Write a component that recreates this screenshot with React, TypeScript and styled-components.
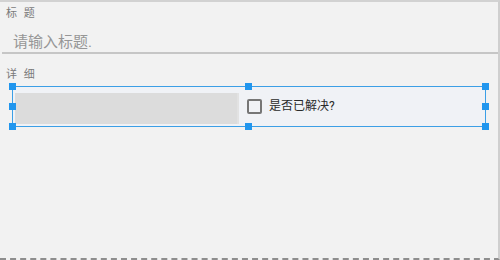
import styled, {createGlobalStyle} from 'styled-components';

const GlobalStyle = createGlobalStyle`
  html, body {
    margin: 0;
    padding: 0;
    background: #f2f2f2;
  }
  body {
    font-family: Roboto, "Noto Sans CJK SC", sans-serif;
  }
`;

const handles: Array<{x: 'left' | 'center' | 'right'; y: 'top' | 'middle' | 'bottom'}> = [
  {x: 'left', y: 'top'},
  {x: 'center', y: 'top'},
  {x: 'right', y: 'top'},
  {x: 'left', y: 'middle'},
  {x: 'right', y: 'middle'},
  {x: 'left', y: 'bottom'},
  {x: 'center', y: 'bottom'},
  {x: 'right', y: 'bottom'},
];

const App = (): JSX.Element => {
  return (
    <>
      <GlobalStyle/>
      <Page>
        <FieldLabel>标 题</FieldLabel>
        <TitleInput placeholder="请输入标题." readOnly/>
        <FieldLabel $gap={14}>详 细</FieldLabel>
        <Selection>
          <DetailField/>
          <CheckRow>
            <CheckBox/>
            <CheckText>是否已解决?</CheckText>
          </CheckRow>
          {handles.map((h) => (
            <Handle key={h.x + h.y} $x={h.x} $y={h.y}/>
          ))}
        </Selection>
      </Page>
    </>
  );
};

export default App;

const Page = styled.div`
  box-sizing: border-box;
  width: 500px;
  height: 260px;
  background: #f2f2f2;
  border-top: 2px solid #d2d2d2;
  border-right: 2px solid #cfcfcf;
  border-bottom: 2px dashed #8e8e8e;
  display: flex;
  flex-direction: column;
`;

const FieldLabel = styled.div<{$gap?: number}>`
  margin-top: ${({$gap}) => ($gap ?? 5)}px;
  padding-left: 6px;
  font-size: 11px;
  line-height: 13px;
  letter-spacing: 2px;
  color: #7a7a7a;
`;

const TitleInput = styled.input`
  box-sizing: border-box;
  display: block;
  width: 496px;
  height: 34px;
  margin: 0 0 0 2px;
  padding: 12px 0 0 11px;
  border: none;
  border-bottom: 2px solid #c6c6c6;
  background: transparent;
  outline: none;
  font-family: Roboto, "Noto Sans CJK SC", sans-serif;
  font-size: 15px;
  color: #333;

  &::placeholder {
    color: #969696;
  }
`;

const Selection = styled.div`
  position: relative;
  box-sizing: border-box;
  width: 474px;
  height: 41px;
  margin: 5px 0 0 12px;
  padding: 0 0 2px 2px;
  border: 1px solid #3c9fe6;
  background: #f0f2f6;
  display: flex;
  align-items: flex-end;
`;

const DetailField = styled.div`
  width: 224px;
  height: 31px;
  background: #dcdcdc;
  border-right: 2px solid #e2e2e2;
  box-sizing: border-box;
`;

const CheckRow = styled.label`
  align-self: center;
  display: flex;
  align-items: center;
  margin-left: 8px;
  margin-top: 1px;
`;

const CheckBox = styled.span`
  box-sizing: border-box;
  width: 15px;
  height: 15px;
  border: 2px solid #767676;
  border-radius: 2px;
`;

const CheckText = styled.span`
  margin-left: 7px;
  font-size: 12px;
  line-height: 14px;
  color: #2a2a2a;
`;

const Handle = styled.span<{$x: 'left' | 'center' | 'right'; $y: 'top' | 'middle' | 'bottom'}>`
  position: absolute;
  width: 7px;
  height: 7px;
  background: #2196ee;
  left: ${({$x}) => ($x === 'left' ? '-4px' : $x === 'center' ? 'calc(50% - 4px)' : 'calc(100% - 3px)')};
  top: ${({$y}) => ($y === 'top' ? '-4px' : $y === 'middle' ? 'calc(50% - 4px)' : 'calc(100% - 3px)')};
`;
